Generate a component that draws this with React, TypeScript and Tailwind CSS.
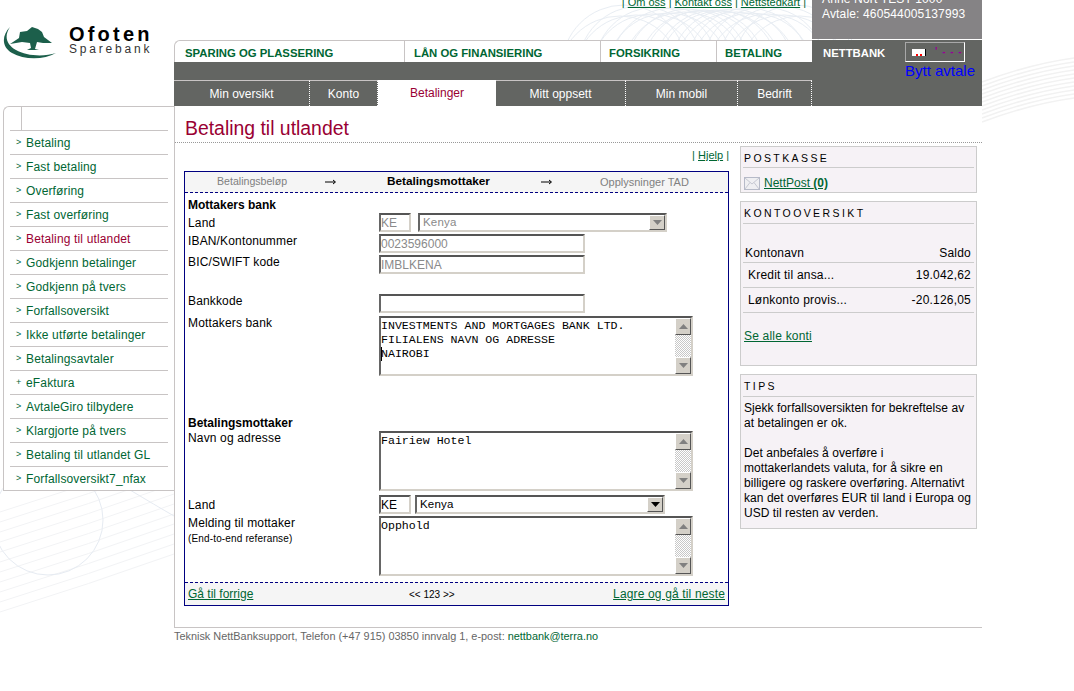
import React from 'react';

const sideItems = [
  'Betaling',
  'Fast betaling',
  'Overføring',
  'Fast overføring',
  'Betaling til utlandet',
  'Godkjenn betalinger',
  'Godkjenn på tvers',
  'Forfallsoversikt',
  'Ikke utførte betalinger',
  'Betalingsavtaler',
  'eFaktura',
  'AvtaleGiro tilbydere',
  'Klargjorte på tvers',
  'Betaling til utlandet GL',
  'Forfallsoversikt7_nfax',
];

const mainTabs = [
  { label: 'SPARING OG PLASSERING', cls: 'w-[230px] pl-[10px] rounded-tl-md' },
  { label: 'LÅN OG FINANSIERING', cls: 'w-[196px] pl-[9px]' },
  { label: 'FORSIKRING', cls: 'w-[116px] pl-[8px]' },
  { label: 'BETALING', cls: 'w-[96px] pl-[8px]' },
];

const subTabs = [
  { label: 'Min oversikt', cls: 'w-[136px]' },
  { label: 'Konto', cls: 'w-[68px]' },
  { label: 'Betalinger', cls: 'w-[118px]', active: true },
  { label: 'Mitt oppsett', cls: 'w-[130px]' },
  { label: 'Min mobil', cls: 'w-[112px]' },
  { label: 'Bedrift', cls: 'w-[74px]' },
];

function Backdrop() {
  const rings = [0, 1, 2, 3, 4, 5, 6, 7, 8, 9, 10, 11];
  const waves = [0, 1, 2, 3, 4, 5, 6, 7, 8, 9, 10];
  return (
    <svg className="absolute inset-0" width="1074" height="691" fill="none">
      {/* guilloche behind the top links */}
      {rings.map((i) => (
        <g key={i} stroke="#e8edf3" strokeWidth="1">
          <circle cx={620 + i * 16} cy={78 - i} r={62} />
          <circle cx={800 - i * 16} cy={78 - i} r={62} />
        </g>
      ))}
      {/* wave lines right of the page */}
      {waves.map((i) => (
        <path key={i} d={`M982 ${82 + i * 4} Q1030 ${64 + i * 4} 1074 ${58 + i * 4}`} stroke="#f2f2f2" strokeWidth="1.5" />
      ))}
      {/* lines under the side menu */}
      {waves.map((i) => (
        <path key={i} d={`M0 ${512 + i * 10} Q90 ${484 + i * 10} 174 ${454 + i * 10}`} stroke="#f2f3f5" strokeWidth="1" />
      ))}
      <circle cx="48" cy="520" r="55" stroke="#e6ebf2" />
      <path d="M130 490 Q155 505 174 516" stroke="#e6ebf2" />
    </svg>
  );
}

function Logo() {
  return (
    <svg width="60" height="40" viewBox="0 0 60 40" className="shrink-0 mt-[24px]">
      <g transform="translate(-3 -24)" fill="#1c5f4b">
        <path d="M10 27C2 35 1 47 12 53C24 60 44 60 56 53C44 57 26 56 16 50C6 44 4 36 10 27Z" />
        <path d="M10 44L19 38L20 32L27 31L32 27L38 29L42 32L44 37L52 43L43 43L37 42L35 49L39 50L27 50L31 48L30 43L22 42Z" />
      </g>
    </svg>
  );
}

function Sidebar() {
  return (
    <div className="h-[385px] border-t border-l border-b border-[#c8c4c4] rounded-tl-md pl-[6px] pr-[6px] bg-white">
      <div className="h-[23px] ml-[11px] w-px bg-[#c8c4c4]" />
      {sideItems.map((item, i) => (
        <div key={i} className="h-[24px] border-t border-[#c8c4c4] flex items-center text-[12px] tracking-[0.15px]">
          <span className="w-[16px] pl-[6px] text-[9px] text-[#006633] leading-none">{item === 'eFaktura' ? '+' : '>'}</span>
          <a className={i === 4 ? 'text-[#990033]' : 'text-[#006633]'}>{item}</a>
        </div>
      ))}
    </div>
  );
}

function Header() {
  return (
    <div className="flex h-[106px]">
      <div className="w-[638px] flex flex-col">
        <div className="h-[40px] relative">
          <div className="flex justify-end pr-[6px] -mt-[6px] text-[11px] text-[#006633] gap-[3px]">
            <span>|</span><a className="underline">Om oss</a>
            <span>|</span><a className="underline">Kontakt oss</a>
            <span>|</span><a className="underline">Nettstedkart</a>
            <span>|</span>
          </div>
        </div>
        <div className="flex h-[22px] text-[11.33px] font-bold text-[#006633]">
          {mainTabs.map((t) => (
            <div key={t.label} className={`${t.cls} bg-white border-t border-l border-[#c8c4c4] flex items-center pt-[3px]`}>
              {t.label}
            </div>
          ))}
        </div>
        <div className="h-[18px] bg-[#636562]" />
        <div className="flex h-[26px] bg-[#636562] text-[12px] text-white">
          {subTabs.map((t) => (
            <div
              key={t.label}
              className={`${t.cls} flex items-center justify-center ${
                t.active
                  ? 'bg-white text-[#990033]'
                  : 'border-t border-[#c8c4c4] border-r border-r-white border-dotted [border-top-style:solid]'
              }`}
            >
              {t.label}
            </div>
          ))}
        </div>
      </div>
      <div className="w-[170px] flex flex-col">
        <div className="h-[39px] bg-[#858385] text-white text-[12px] tracking-[0.15px] pl-[10px] leading-[15px] overflow-hidden mb-px">
          <div className="-mt-[8px]">Anne Nort TEST 1000</div>
          <div>Avtale: 460544005137993</div>
        </div>
        <div className="h-[66px] bg-[#636562] pt-[2px] pl-[11px] relative">
          <div className="flex">
            <div className="w-[82px] text-white font-bold text-[11.33px] pt-[3px]">NETTBANK</div>
            <div className="w-[60px] h-[20px] border border-t-[#a8a8a8] border-l-[#a8a8a8] border-r-white border-b-white flex items-center pl-[6px] gap-[9px]">
              <svg width="14" height="7" viewBox="0 0 14 7">
                <rect width="14" height="7" fill="#fff" />
                <rect x="13" width="1" height="7" fill="#000" />
                <rect x="4" y="5" width="2" height="2" fill="#f00" />
                <rect x="8" y="5" width="2" height="2" fill="#f00" />
              </svg>
              <span className="text-[#990099] text-[10px] leading-none tracking-[1px] font-bold">' - - -</span>
            </div>
          </div>
          <a className="block ml-[82px] text-[15px] leading-[18px] text-[#0000ff] whitespace-nowrap">Bytt avtale</a>
        </div>
      </div>
    </div>
  );
}

function Arrow() {
  return (
    <svg width="11" height="6" viewBox="0 0 11 6" className="shrink-0">
      <path d="M0 3H10M8 1L10.5 3L8 5" stroke="#000" fill="none" />
    </svg>
  );
}

const inset = 'border-2 border-t-[#555] border-l-[#666] border-r-[#d4d0c8] border-b-[#d4d0c8]';

function TextInput({ value, width, muted }: { value: string; width: string; muted?: boolean }) {
  return (
    <input
      readOnly
      value={value}
      className={`${inset} ${width} h-[19px] bg-white px-0 text-[12px] outline-none ${muted ? 'text-[#8a8a8a]' : 'text-black'}`}
    />
  );
}

function ScrollBtn({ up }: { up?: boolean }) {
  return (
    <div className="w-[16px] h-[17px] bg-[#d4d0c8] border border-t-white border-l-white border-r-[#555] border-b-[#555] flex items-center justify-center">
      <svg width="9" height="5" viewBox="0 0 9 5">
        <path d={up ? 'M4.5 0L9 5H0Z' : 'M0 0H9L4.5 5Z'} fill="#808080" />
      </svg>
    </div>
  );
}

function Memo({ lines, caretLine }: { lines: string; caretLine?: number }) {
  return (
    <div className={`${inset} w-[314px] h-[60px] bg-white flex relative`}>
      <textarea
        readOnly
        value={lines}
        className="flex-1 resize-none overflow-hidden pt-px text-[11.6px] leading-[14px] text-black outline-none [font-family:'Liberation_Mono',monospace]"
      />
      {caretLine === 2 && <div className="absolute left-0 top-[29px] w-px h-[14px] bg-black" />}
      <div className="w-[16px] flex flex-col justify-between bg-[repeating-conic-gradient(#c8c8c8_0_25%,#ffffff_0_50%)] bg-[length:2px_2px]">
        <ScrollBtn up />
        <ScrollBtn />
      </div>
    </div>
  );
}

function SelectBox({ width, ml, muted }: { width: string; ml: string; muted?: boolean }) {
  return (
    <div className={`${inset} ${width} ${ml} h-[19px] bg-white flex items-center justify-between`}>
      <span className={`pl-[3px] text-[11.5px] tracking-[0.2px] ${muted ? 'text-[#8a8a8a]' : 'text-black'}`}>Kenya</span>
      <div className="w-[16px] h-[15px] bg-[#d4d0c8] border border-t-white border-l-white border-r-[#555] border-b-[#555] flex items-center justify-center">
        <svg width="9" height="5" viewBox="0 0 9 5">
          <path d="M0 0H9L4.5 5Z" fill={muted ? '#808080' : '#000'} />
        </svg>
      </div>
    </div>
  );
}

function Row({ label, pt, mb, children }: { label: React.ReactNode; pt?: string; mb: string; children: React.ReactNode }) {
  return (
    <div className={`flex ${mb}`}>
      <div className={`w-[191px] text-[12px] leading-[14px] tracking-[0.15px] ${pt ?? ''}`}>{label}</div>
      <div className="flex">{children}</div>
    </div>
  );
}

function PaymentForm() {
  return (
    <div className="w-[545px] h-[435px] border border-[#000080] flex flex-col">
      <div className="h-[21px] bg-[#f5f5f5] border-b border-dashed border-[#000080] flex items-center text-[11px]">
        <div className="w-[140px] pl-[32px] text-[10.6px] text-[#808080] whitespace-nowrap">Betalingsbeløp</div>
        <Arrow />
        <div className="w-[205px] pl-[51px] text-[11.8px] font-bold whitespace-nowrap">Betalingsmottaker</div>
        <Arrow />
        <div className="pl-[48px] text-[#808080] whitespace-nowrap">Opplysninger TAD</div>
      </div>
      <div className="flex-1 pl-[3px]">
        <div className="h-[20px] flex items-end text-[12px] font-bold leading-[14px] pb-[1px]">Mottakers bank</div>
        <Row label="Land" pt="pt-[3px]" mb="mb-[2px]">
          <TextInput value="KE" width="w-[32px]" muted />
          <SelectBox width="w-[249px]" ml="ml-[7px]" muted />
        </Row>
        <Row label="IBAN/Kontonummer" mb="mb-[2px]">
          <TextInput value="0023596000" width="w-[206px]" muted />
        </Row>
        <Row label="BIC/SWIFT kode" mb="mb-[20px]">
          <TextInput value="IMBLKENA" width="w-[206px]" muted />
        </Row>
        <Row label="Bankkode" mb="mb-[3px]">
          <TextInput value="" width="w-[206px]" />
        </Row>
        <Row label="Mottakers bank" mb="mb-[40px]">
          <Memo lines={'INVESTMENTS AND MORTGAGES BANK LTD.\nFILIALENS NAVN OG ADRESSE\nNAIROBI'} caretLine={2} />
        </Row>
        <div className="h-[15px] text-[12px] font-bold leading-[14px]">Betalingsmottaker</div>
        <Row label="Navn og adresse" mb="mb-[4px]">
          <Memo lines="Fairiew Hotel" />
        </Row>
        <Row label="Land" pt="pt-[3px]" mb="mb-[2px]">
          <TextInput value="KE" width="w-[32px]" />
          <SelectBox width="w-[250px]" ml="ml-[4px]" />
        </Row>
        <Row
          label={
            <>
              <div>Melding til mottaker</div>
              <div className="text-[10px] pt-[2px]">(End-to-end referanse)</div>
            </>
          }
          mb="mb-0"
        >
          <Memo lines="Opphold" />
        </Row>
      </div>
      <div className="h-[23px] bg-[#f5f5f5] border-t border-dashed border-[#000080] flex items-center text-[12px] pl-[3px] pr-[3px]">
        <a className="w-[221px] underline text-[#006633]">Gå til forrige</a>
        <span className="text-[10px]">&lt;&lt; 123 &gt;&gt;</span>
        <a className="ml-auto underline tracking-[0.15px] text-[#006633]">Lagre og gå til neste</a>
      </div>
    </div>
  );
}

function Panel({ title, cls, head, children }: { title: string; cls: string; head: string; children: React.ReactNode }) {
  return (
    <div className={`${cls} border border-[#cccccc] bg-[#f6f2f6] px-[2px]`}>
      <div className={`${head} border-b border-[#cccccc] pl-[1px] pt-[3px] text-[10.5px] tracking-[2.4px] flex items-center`}>{title}</div>
      {children}
    </div>
  );
}

function SidePanels() {
  return (
    <div className="w-[237px] ml-[11px] mt-[3px] flex flex-col gap-[8px] text-[12px]">
      <Panel title="POSTKASSE" cls="h-[47px]" head="h-[21px]">
        <div className="flex items-center pl-px pt-[6px]">
          <svg width="16" height="13" viewBox="0 0 16 13" className="shrink-0">
            <rect x="0.5" y="0.5" width="15" height="12" fill="#efeff2" stroke="#b6bac8" />
            <path d="M1 1L8 7L15 1M1 12L6 5.5M15 12L10 5.5" fill="none" stroke="#c6c8d2" />
          </svg>
          <a className="ml-[4px] underline text-[#006633]">
            NettPost <b>(0)</b>
          </a>
        </div>
      </Panel>
      <Panel title="KONTOOVERSIKT" cls="h-[165px]" head="h-[22px]">
        <div className="pt-[20px] tracking-[0.2px]">
          <div className="h-[19px] border-b border-[#cccccc] pl-[2px] pr-[3px] flex justify-between items-center">
            <span>Kontonavn</span><span>Saldo</span>
          </div>
          <div className="h-[25px] border-b border-[#cccccc] pl-[5px] pr-[3px] flex justify-between items-center">
            <span>Kredit til ansa...</span><span>19.042,62</span>
          </div>
          <div className="h-[25px] border-b border-[#cccccc] pl-[5px] pr-[3px] flex justify-between items-center">
            <span>Lønkonto provis...</span><span>-20.126,05</span>
          </div>
          <a className="block mt-[14px] pl-px underline text-[#006633]">Se alle konti</a>
        </div>
      </Panel>
      <Panel title="TIPS" cls="h-[155px]" head="h-[22px]">
        <div className="pt-[4px] pl-px leading-[15px] tracking-[0.05px] whitespace-nowrap">
          <p>Sjekk forfallsoversikten for bekreftelse av<br />at betalingen er ok.</p>
          <p className="mt-[15px]">
            Det anbefales å overføre i<br />
            mottakerlandets valuta, for å sikre en<br />
            billigere og raskere overføring. Alternativt<br />
            kan det overføres EUR til land i Europa og<br />
            USD til resten av verden.
          </p>
        </div>
      </Panel>
    </div>
  );
}

export default function App() {
  return (
    <div className="relative w-[1074px] h-[691px] overflow-hidden bg-white text-black [font-family:'Liberation_Sans',Arial,sans-serif]">
      <Backdrop />
      <div className="relative flex w-[982px]">
        <div className="w-[174px] shrink-0 pl-[3px]">
          <div className="h-[106px] flex items-start">
            <Logo />
            <div className="pt-[25px] pl-[6px]">
              <div className="text-[20px] leading-[18px] font-bold tracking-[3.2px]">Ofoten</div>
              <div className="text-[12px] leading-[12px] tracking-[2.8px] text-[#333]">Sparebank</div>
            </div>
          </div>
          <Sidebar />
        </div>
        <div className="w-[808px] shrink-0">
          <Header />
          <div className="h-[522px] border-l border-b border-[#c8c4c4] bg-white">
            <div className="h-[37px] border-b border-dotted border-[#999] pl-[10px] text-[19.4px] leading-[44px] text-[#990033]">
              Betaling til utlandet
            </div>
            <div className="flex pl-[9px]">
              <div>
                <div className="h-[28px] pt-[4px] text-right text-[11px] text-[#006633]">
                  | <a className="underline">Hjelp</a> |
                </div>
                <PaymentForm />
              </div>
              <SidePanels />
            </div>
          </div>
          <div className="text-[10.9px] text-[#666]">
            Teknisk NettBanksupport, Telefon (+47 915) 03850 innvalg 1, e-post: <span className="text-[#006633]">nettbank@terra.no</span>
          </div>
        </div>
      </div>
    </div>
  );
}
